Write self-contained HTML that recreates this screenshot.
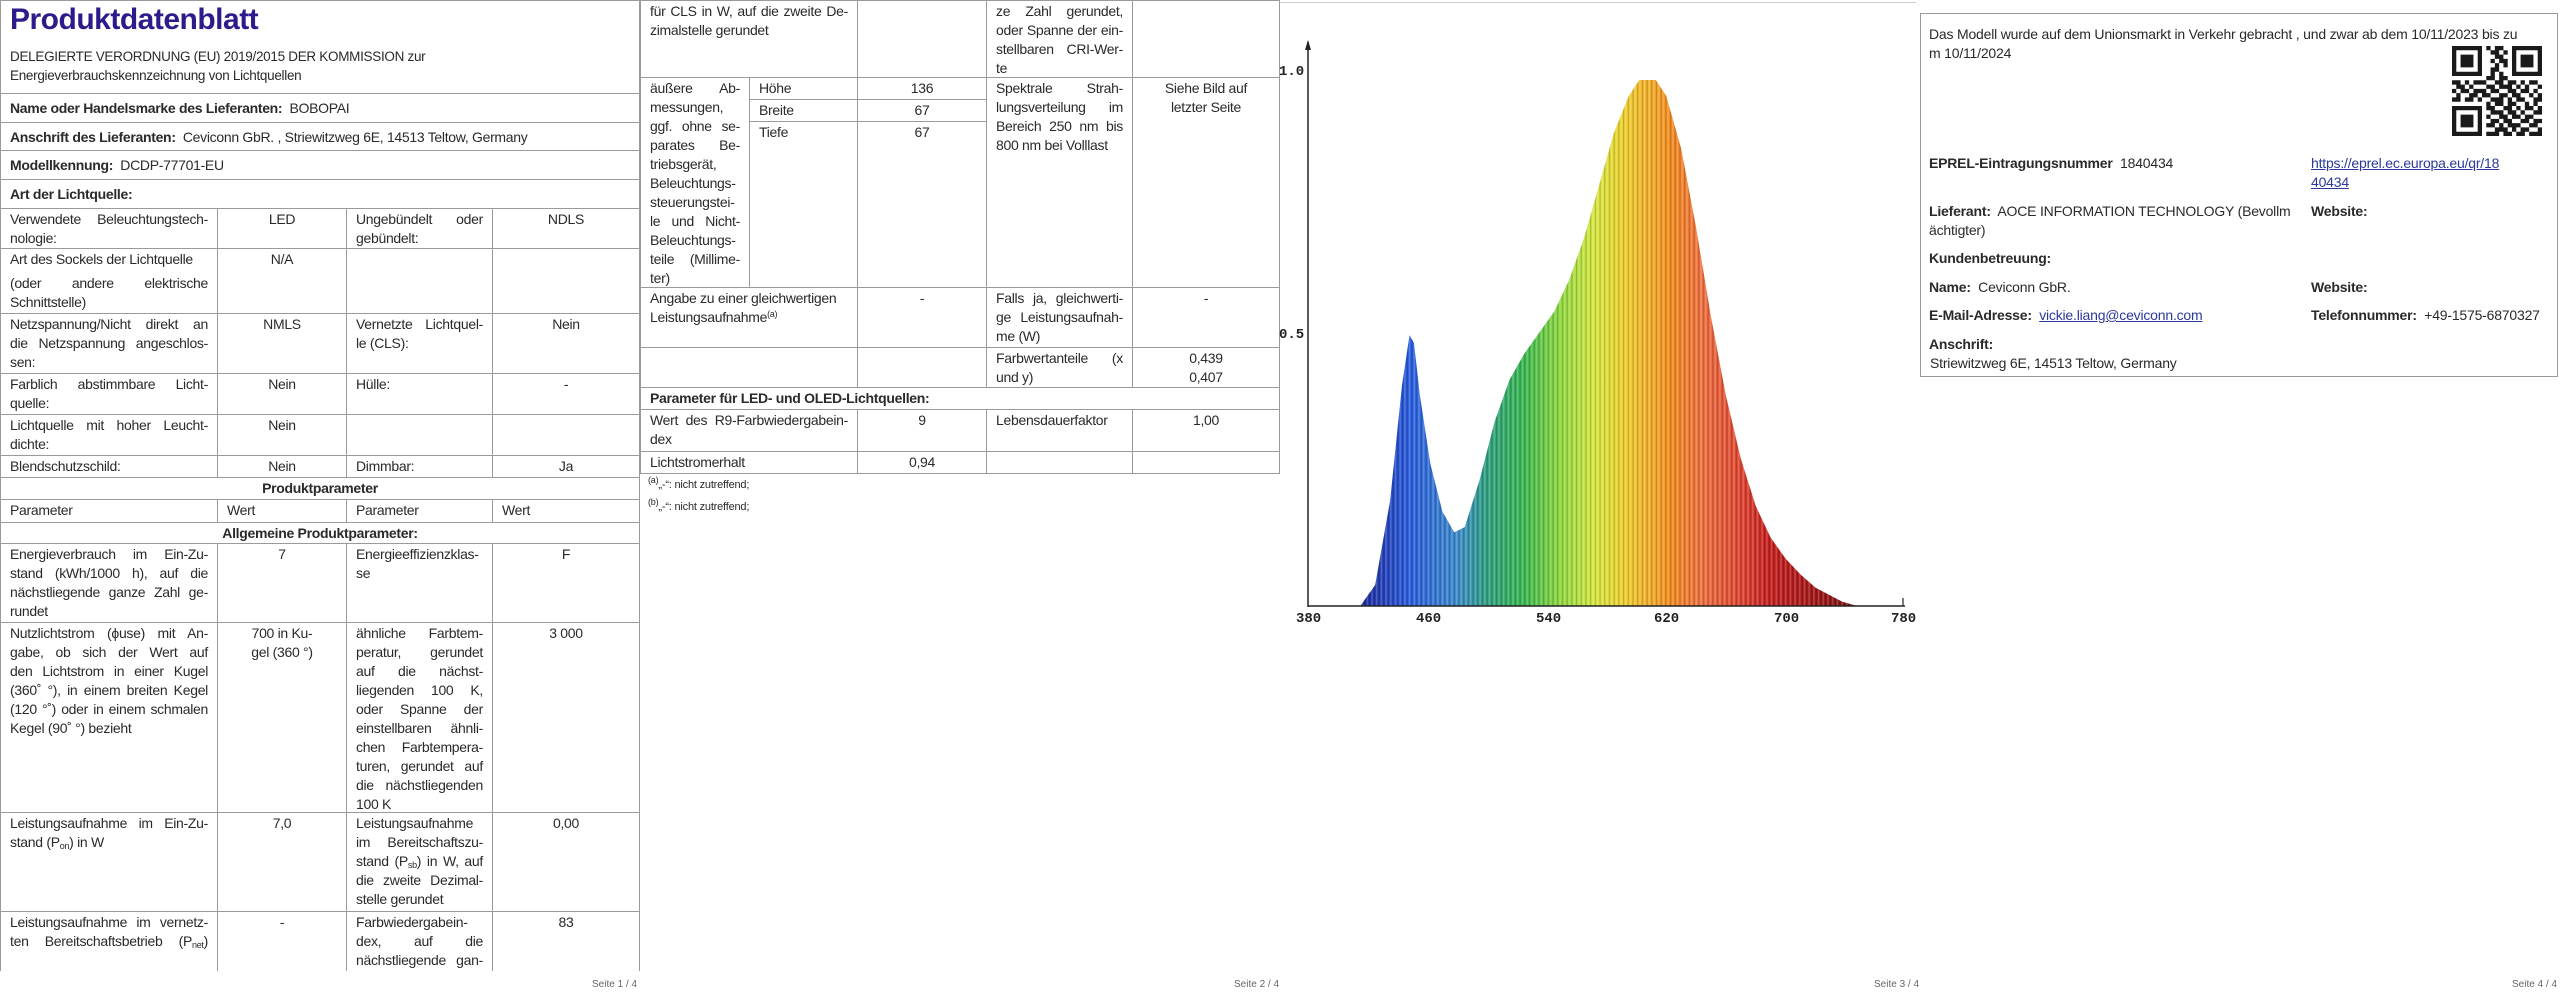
<!DOCTYPE html>
<html><head><meta charset="utf-8">
<style>
*{margin:0;padding:0}
body{width:2560px;height:1001px;background:#fff;position:relative;overflow:hidden;font-family:"Liberation Sans",sans-serif;color:#2a2a2a}
.c{position:absolute;box-sizing:border-box;border:1px solid #9a9a9a;padding:1px 9px 0 9px;font-size:14px;line-height:19px;overflow:hidden;letter-spacing:-0.3px}
.c div{white-space:nowrap}
.j{text-align:justify;text-align-last:justify}
.m{text-align:center}
.b{font-weight:bold}
.nb{border-bottom:none}
sub{font-size:9px;line-height:0;vertical-align:-2px}
sup{font-size:9px;line-height:0;vertical-align:5px}
.f{position:absolute;font-size:10px;color:#666;top:979px;white-space:nowrap}
.t{position:absolute;font-size:14px;line-height:19px;white-space:nowrap;letter-spacing:-0.2px}
a{color:#2b3a9a;text-decoration:underline}
.ax{position:absolute;font-family:"Liberation Mono",monospace;font-weight:bold;font-size:14px;color:#222}
</style></head><body>

<!-- PAGE 1 -->
<div class="c" style="left:0;top:0;width:640px;height:94px;padding-top:0">
  <div style="font-size:30px;font-weight:bold;color:#2e1a8a;line-height:38px;letter-spacing:-0.5px">Produktdatenblatt</div>
  <div style="font-size:13.5px;margin-top:8px">DELEGIERTE VERORDNUNG (EU) 2019/2015 DER KOMMISSION zur</div>
  <div style="font-size:13.5px">Energieverbrauchskennzeichnung von Lichtquellen</div>
</div>
<div class="c" style="left:0;top:93px;width:640px;height:30px;line-height:27px"><b>Name oder Handelsmarke des Lieferanten:</b>&nbsp; BOBOPAI</div>
<div class="c" style="left:0;top:122px;width:640px;height:29px;line-height:26px"><b>Anschrift des Lieferanten:</b>&nbsp; Ceviconn GbR. , Striewitzweg 6E, 14513 Teltow, Germany</div>
<div class="c" style="left:0;top:150px;width:640px;height:30px;line-height:27px"><b>Modellkennung:</b>&nbsp; DCDP-77701-EU</div>
<div class="c b" style="left:0;top:179px;width:640px;height:30px;line-height:27px">Art der Lichtquelle:</div>

<div class="c" style="left:0;top:208px;width:218px;height:41px"><div class="j">Verwendete Beleuchtungstech-</div><div>nologie:</div></div>
<div class="c m" style="left:217px;top:208px;width:130px;height:41px">LED</div>
<div class="c" style="left:346px;top:208px;width:147px;height:41px"><div class="j">Ungebündelt oder</div><div>gebündelt:</div></div>
<div class="c m" style="left:492px;top:208px;width:148px;height:41px">NDLS</div>

<div class="c" style="left:0;top:248px;width:218px;height:66px"><div>Art des Sockels der Lichtquelle</div><div class="j" style="margin-top:5px">(oder andere elektrische</div><div>Schnittstelle)</div></div>
<div class="c m" style="left:217px;top:248px;width:130px;height:66px">N/A</div>
<div class="c" style="left:346px;top:248px;width:147px;height:66px"></div>
<div class="c" style="left:492px;top:248px;width:148px;height:66px"></div>

<div class="c" style="left:0;top:313px;width:218px;height:61px"><div class="j">Netzspannung/Nicht direkt an</div><div class="j">die Netzspannung angeschlos-</div><div>sen:</div></div>
<div class="c m" style="left:217px;top:313px;width:130px;height:61px">NMLS</div>
<div class="c" style="left:346px;top:313px;width:147px;height:61px"><div class="j">Vernetzte Lichtquel-</div><div>le (CLS):</div></div>
<div class="c m" style="left:492px;top:313px;width:148px;height:61px">Nein</div>

<div class="c" style="left:0;top:373px;width:218px;height:42px"><div class="j">Farblich abstimmbare Licht-</div><div>quelle:</div></div>
<div class="c m" style="left:217px;top:373px;width:130px;height:42px">Nein</div>
<div class="c" style="left:346px;top:373px;width:147px;height:42px">Hülle:</div>
<div class="c m" style="left:492px;top:373px;width:148px;height:42px">-</div>

<div class="c" style="left:0;top:414px;width:218px;height:42px"><div class="j">Lichtquelle mit hoher Leucht-</div><div>dichte:</div></div>
<div class="c m" style="left:217px;top:414px;width:130px;height:42px">Nein</div>
<div class="c" style="left:346px;top:414px;width:147px;height:42px"></div>
<div class="c" style="left:492px;top:414px;width:148px;height:42px"></div>

<div class="c" style="left:0;top:455px;width:218px;height:23px">Blendschutzschild:</div>
<div class="c m" style="left:217px;top:455px;width:130px;height:23px">Nein</div>
<div class="c" style="left:346px;top:455px;width:147px;height:23px">Dimmbar:</div>
<div class="c m" style="left:492px;top:455px;width:148px;height:23px">Ja</div>

<div class="c b m" style="left:0;top:477px;width:640px;height:23px">Produktparameter</div>

<div class="c" style="left:0;top:499px;width:218px;height:24px">Parameter</div>
<div class="c" style="left:217px;top:499px;width:130px;height:24px">Wert</div>
<div class="c" style="left:346px;top:499px;width:147px;height:24px">Parameter</div>
<div class="c" style="left:492px;top:499px;width:148px;height:24px">Wert</div>

<div class="c b m" style="left:0;top:522px;width:640px;height:22px;line-height:18px">Allgemeine Produktparameter:</div>

<div class="c" style="left:0;top:543px;width:218px;height:80px"><div class="j">Energieverbrauch im Ein-Zu-</div><div class="j">stand (kWh/1000 h), auf die</div><div class="j">nächstliegende ganze Zahl ge-</div><div>rundet</div></div>
<div class="c m" style="left:217px;top:543px;width:130px;height:80px">7</div>
<div class="c" style="left:346px;top:543px;width:147px;height:80px"><div>Energieeffizienzklas-</div><div>se</div></div>
<div class="c m" style="left:492px;top:543px;width:148px;height:80px">F</div>

<div class="c" style="left:0;top:622px;width:218px;height:191px"><div class="j">Nutzlichtstrom (ϕuse) mit An-</div><div class="j">gabe, ob sich der Wert auf</div><div class="j">den Lichtstrom in einer Kugel</div><div class="j">(360˚ °), in einem breiten Kegel</div><div class="j">(120 °˚) oder in einem schmalen</div><div>Kegel (90˚ °) bezieht</div></div>
<div class="c m" style="left:217px;top:622px;width:130px;height:191px"><div>700 in Ku-</div><div>gel (360 °)</div></div>
<div class="c" style="left:346px;top:622px;width:147px;height:191px"><div class="j">ähnliche Farbtem-</div><div class="j">peratur, gerundet</div><div class="j">auf die nächst-</div><div class="j">liegenden 100 K,</div><div class="j">oder Spanne der</div><div class="j">einstellbaren ähnli-</div><div class="j">chen Farbtempera-</div><div class="j">turen, gerundet auf</div><div class="j">die nächstliegenden</div><div>100 K</div></div>
<div class="c m" style="left:492px;top:622px;width:148px;height:191px">3 000</div>

<div class="c" style="left:0;top:812px;width:218px;height:100px"><div class="j">Leistungsaufnahme im Ein-Zu-</div><div>stand (P<sub>on</sub>) in W</div></div>
<div class="c m" style="left:217px;top:812px;width:130px;height:100px">7,0</div>
<div class="c" style="left:346px;top:812px;width:147px;height:100px"><div>Leistungsaufnahme</div><div class="j">im Bereitschaftszu-</div><div class="j">stand (P<sub>sb</sub>) in W, auf</div><div class="j">die zweite Dezimal-</div><div>stelle gerundet</div></div>
<div class="c m" style="left:492px;top:812px;width:148px;height:100px">0,00</div>

<div class="c nb" style="left:0;top:911px;width:218px;height:60px"><div class="j">Leistungsaufnahme im vernetz-</div><div class="j">ten Bereitschaftsbetrieb (P<sub>net</sub>)</div></div>
<div class="c m nb" style="left:217px;top:911px;width:130px;height:60px">-</div>
<div class="c nb" style="left:346px;top:911px;width:147px;height:60px"><div>Farbwiedergabein-</div><div class="j">dex, auf die</div><div class="j">nächstliegende gan-</div></div>
<div class="c m nb" style="left:492px;top:911px;width:148px;height:60px">83</div>
<div class="f" style="left:592px">Seite 1 / 4</div>

<!-- PAGE 2 -->
<div class="c" style="left:640px;top:0;width:218px;height:78px"><div class="j">für CLS in W, auf die zweite De-</div><div>zimalstelle gerundet</div></div>
<div class="c" style="left:857px;top:0;width:130px;height:78px"></div>
<div class="c" style="left:986px;top:0;width:147px;height:78px"><div class="j">ze Zahl gerundet,</div><div class="j">oder Spanne der ein-</div><div class="j">stellbaren CRI-Wer-</div><div>te</div></div>
<div class="c" style="left:1132px;top:0;width:148px;height:78px"></div>

<div class="c" style="left:640px;top:77px;width:110px;height:211px"><div class="j">äußere Ab-</div><div>messungen,</div><div class="j">ggf. ohne se-</div><div class="j">parates Be-</div><div>triebsgerät,</div><div>Beleuchtungs-</div><div>steuerungstei-</div><div class="j">le und Nicht-</div><div>Beleuchtungs-</div><div class="j">teile (Millime-</div><div>ter)</div></div>
<div class="c" style="left:749px;top:77px;width:109px;height:23px">Höhe</div>
<div class="c" style="left:749px;top:99px;width:109px;height:23px">Breite</div>
<div class="c" style="left:749px;top:121px;width:109px;height:167px">Tiefe</div>
<div class="c m" style="left:857px;top:77px;width:130px;height:23px">136</div>
<div class="c m" style="left:857px;top:99px;width:130px;height:23px">67</div>
<div class="c m" style="left:857px;top:121px;width:130px;height:167px">67</div>
<div class="c" style="left:986px;top:77px;width:147px;height:211px"><div class="j">Spektrale Strah-</div><div class="j">lungsverteilung im</div><div class="j">Bereich 250 nm bis</div><div>800 nm bei Volllast</div></div>
<div class="c m" style="left:1132px;top:77px;width:148px;height:211px"><div>Siehe Bild auf</div><div>letzter Seite</div></div>

<div class="c" style="left:640px;top:287px;width:218px;height:61px"><div>Angabe zu einer gleichwertigen</div><div>Leistungsaufnahme<sup>(a)</sup></div></div>
<div class="c m" style="left:857px;top:287px;width:130px;height:61px">-</div>
<div class="c" style="left:986px;top:287px;width:147px;height:61px"><div class="j">Falls ja, gleichwerti-</div><div class="j">ge Leistungsaufnah-</div><div>me (W)</div></div>
<div class="c m" style="left:1132px;top:287px;width:148px;height:61px">-</div>

<div class="c" style="left:640px;top:347px;width:218px;height:41px"></div>
<div class="c" style="left:857px;top:347px;width:130px;height:41px"></div>
<div class="c" style="left:986px;top:347px;width:147px;height:41px"><div class="j">Farbwertanteile (x</div><div>und y)</div></div>
<div class="c m" style="left:1132px;top:347px;width:148px;height:41px"><div>0,439</div><div>0,407</div></div>

<div class="c b" style="left:640px;top:387px;width:640px;height:23px">Parameter für LED- und OLED-Lichtquellen:</div>

<div class="c" style="left:640px;top:409px;width:218px;height:43px"><div class="j">Wert des R9-Farbwiedergabein-</div><div>dex</div></div>
<div class="c m" style="left:857px;top:409px;width:130px;height:43px">9</div>
<div class="c" style="left:986px;top:409px;width:147px;height:43px">Lebensdauerfaktor</div>
<div class="c m" style="left:1132px;top:409px;width:148px;height:43px">1,00</div>

<div class="c" style="left:640px;top:451px;width:218px;height:23px">Lichtstromerhalt</div>
<div class="c m" style="left:857px;top:451px;width:130px;height:23px">0,94</div>
<div class="c" style="left:986px;top:451px;width:147px;height:23px"></div>
<div class="c" style="left:1132px;top:451px;width:148px;height:23px"></div>

<div class="t" style="left:648px;top:476px;font-size:11px"><sup>(a)</sup>„-“: nicht zutreffend;</div>
<div class="t" style="left:648px;top:498px;font-size:11px"><sup>(b)</sup>„-“: nicht zutreffend;</div>
<div class="f" style="left:1234px">Seite 2 / 4</div>

<!-- PAGE 3 -->
<div style="position:absolute;left:1280px;top:2px;width:636px;height:1px;background:#ccc"></div>
<svg style="position:absolute;left:0;top:0" width="2560" height="1001">
  <defs>
    <linearGradient id="sp" gradientUnits="userSpaceOnUse" x1="0" y1="0" x2="400" y2="0">
      <stop offset="0.09" stop-color="#1e2a9a"/>
      <stop offset="0.17" stop-color="#2a5ce0"/>
      <stop offset="0.25" stop-color="#3c8ccc"/>
      <stop offset="0.30" stop-color="#2ea080"/>
      <stop offset="0.36" stop-color="#38b850"/>
      <stop offset="0.42" stop-color="#8cd840"/>
      <stop offset="0.48" stop-color="#d8e840"/>
      <stop offset="0.53" stop-color="#f0d030"/>
      <stop offset="0.58" stop-color="#f4a828"/>
      <stop offset="0.61" stop-color="#f48a20"/>
      <stop offset="0.66" stop-color="#f07040"/>
      <stop offset="0.72" stop-color="#e04830"/>
      <stop offset="0.77" stop-color="#c82020"/>
      <stop offset="0.84" stop-color="#a81818"/>
      <stop offset="0.92" stop-color="#701010"/>
    </linearGradient>
    <pattern id="st" patternUnits="userSpaceOnUse" x="0" y="0" width="3.15" height="2">
      <rect x="0" y="0" width="0.8" height="2" fill="#000" fill-opacity="0.18"/>
      <rect x="1.4" y="0" width="1" height="2" fill="#fff" fill-opacity="0.2"/>
    </pattern>
  </defs>
  <g transform="translate(1308,606) scale(1.4925,-526)">
    <path fill="url(#sp)" d="M35 0 L45 0.04 L55 0.2 L63 0.42 L68 0.515 L71 0.5 L75 0.4 L82 0.27 L90 0.18 L98 0.14 L105 0.15 L115 0.24 L125 0.35 L135 0.43 L145 0.48 L155 0.52 L165 0.56 L175 0.62 L185 0.70 L195 0.80 L205 0.90 L215 0.97 L222 1.0 L233 1.0 L240 0.97 L250 0.87 L260 0.72 L270 0.55 L280 0.40 L290 0.28 L300 0.19 L310 0.13 L320 0.09 L330 0.06 L340 0.035 L350 0.02 L358 0.008 L368 0 Z"/>
    <path fill="url(#st)" d="M35 0 L45 0.04 L55 0.2 L63 0.42 L68 0.515 L71 0.5 L75 0.4 L82 0.27 L90 0.18 L98 0.14 L105 0.15 L115 0.24 L125 0.35 L135 0.43 L145 0.48 L155 0.52 L165 0.56 L175 0.62 L185 0.70 L195 0.80 L205 0.90 L215 0.97 L222 1.0 L233 1.0 L240 0.97 L250 0.87 L260 0.72 L270 0.55 L280 0.40 L290 0.28 L300 0.19 L310 0.13 L320 0.09 L330 0.06 L340 0.035 L350 0.02 L358 0.008 L368 0 Z"/>
  </g>
  <line x1="1308" y1="42" x2="1308" y2="607" stroke="#222" stroke-width="1.5"/>
  <path d="M1305 50 L1308 40 L1311 50 Z" fill="#222"/>
  <line x1="1308" y1="606" x2="1905" y2="606" stroke="#222" stroke-width="1.5"/>
  <line x1="1903" y1="598" x2="1903" y2="606" stroke="#222" stroke-width="1.2"/>
</svg>
<div class="ax" style="left:1279px;top:64px">1.0</div>
<div class="ax" style="left:1279px;top:327px">0.5</div>
<div class="ax" style="left:1296px;top:611px">380</div>
<div class="ax" style="left:1416px;top:611px">460</div>
<div class="ax" style="left:1536px;top:611px">540</div>
<div class="ax" style="left:1654px;top:611px">620</div>
<div class="ax" style="left:1774px;top:611px">700</div>
<div class="ax" style="left:1891px;top:611px">780</div>
<div class="f" style="left:1874px">Seite 3 / 4</div>

<!-- PAGE 4 -->
<div style="position:absolute;left:1920px;top:13px;width:638px;height:364px;box-sizing:border-box;border:1px solid #999"></div>
<div class="t" style="left:1929px;top:25px">Das Modell wurde auf dem Unionsmarkt in Verkehr gebracht , und zwar ab dem 10/11/2023 bis zu</div>
<div class="t" style="left:1929px;top:44px">m 10/11/2024</div>
<svg style="position:absolute;left:2452px;top:46px" width="90" height="90" viewBox="0 0 21 21">
  <g fill="#1a1a1a">
    <path d="M0 0h7v7h-7zM1 1v5h5v-5zM2 2h3v3h-3z" fill-rule="evenodd"/>
    <path d="M14 0h7v7h-7zM15 1v5h5v-5zM16 2h3v3h-3z" fill-rule="evenodd"/>
    <path d="M0 14h7v7h-7zM1 15v5h5v-5zM2 16h3v3h-3z" fill-rule="evenodd"/>
    <path d="M8 0h1v1h-1zM10 0h2v1h-2zM9 1h2v1h-2zM12 1h1v1h-1zM10 2h2v1h-2zM9 3h1v1h-1zM11 3h2v1h-2zM10 4h1v1h-1zM12 4h1v1h-1zM9 5h2v1h-2zM9 6h1v1h-1zM11 6h1v1h-1zM8 7h2v1h-2zM11 7h2v1h-2zM0 8h2v1h-2zM3 8h1v1h-1zM5 8h3v1h-3zM10 8h2v1h-2zM13 8h2v1h-2zM16 8h1v1h-1zM18 8h2v1h-2zM1 9h2v1h-2zM4 9h1v1h-1zM8 9h2v1h-2zM11 9h3v1h-3zM15 9h1v1h-1zM17 9h1v1h-1zM20 9h1v1h-1zM0 10h1v1h-1zM2 10h2v1h-2zM5 10h3v1h-3zM9 10h2v1h-2zM13 10h2v1h-2zM16 10h2v1h-2zM19 10h1v1h-1zM1 11h1v1h-1zM4 11h2v1h-2zM7 11h2v1h-2zM11 11h2v1h-2zM14 11h2v1h-2zM18 11h1v1h-1zM20 11h1v1h-1zM0 12h2v1h-2zM3 12h2v1h-2zM6 12h1v1h-1zM9 12h3v1h-3zM13 12h1v1h-1zM15 12h2v1h-2zM19 12h2v1h-2zM8 13h1v1h-1zM10 13h2v1h-2zM13 13h2v1h-2zM17 13h1v1h-1zM19 13h1v1h-1zM8 14h2v1h-2zM12 14h2v1h-2zM15 14h1v1h-1zM17 14h2v1h-2zM20 14h1v1h-1zM9 15h3v1h-3zM13 15h2v1h-2zM16 15h1v1h-1zM19 15h2v1h-2zM8 16h1v1h-1zM11 16h2v1h-2zM14 16h2v1h-2zM17 16h2v1h-2zM9 17h2v1h-2zM12 17h2v1h-2zM16 17h2v1h-2zM19 17h2v1h-2zM8 18h2v1h-2zM11 18h1v1h-1zM13 18h3v1h-3zM18 18h2v1h-2zM10 19h3v1h-3zM14 19h1v1h-1zM16 19h2v1h-2zM20 19h1v1h-1zM8 20h3v1h-3zM12 20h2v1h-2zM15 20h2v1h-2zM18 20h3v1h-3z"/>
  </g>
</svg>
<div class="t" style="left:1929px;top:154px"><b>EPREL-Eintragungsnummer</b>&nbsp; 1840434</div>
<div class="t" style="left:2311px;top:154px"><a>https://eprel.ec.europa.eu/qr/18</a></div>
<div class="t" style="left:2311px;top:173px"><a>40434</a></div>
<div class="t" style="left:1929px;top:202px"><b>Lieferant:</b>&nbsp; AOCE INFORMATION TECHNOLOGY (Bevollm</div>
<div class="t" style="left:1929px;top:221px">ächtigter)</div>
<div class="t" style="left:2311px;top:202px"><b>Website:</b></div>
<div class="t" style="left:1929px;top:249px"><b>Kundenbetreuung:</b></div>
<div class="t" style="left:1929px;top:278px"><b>Name:</b>&nbsp; Ceviconn GbR.</div>
<div class="t" style="left:2311px;top:278px"><b>Website:</b></div>
<div class="t" style="left:1929px;top:306px"><b>E-Mail-Adresse:</b>&nbsp; <a>vickie.liang@ceviconn.com</a></div>
<div class="t" style="left:2311px;top:306px"><b>Telefonnummer:</b>&nbsp; +49-1575-6870327</div>
<div class="t" style="left:1929px;top:335px"><b>Anschrift:</b></div>
<div class="t" style="left:1930px;top:354px">Striewitzweg 6E, 14513 Teltow, Germany</div>
<div class="f" style="left:2512px">Seite 4 / 4</div>

</body></html>
